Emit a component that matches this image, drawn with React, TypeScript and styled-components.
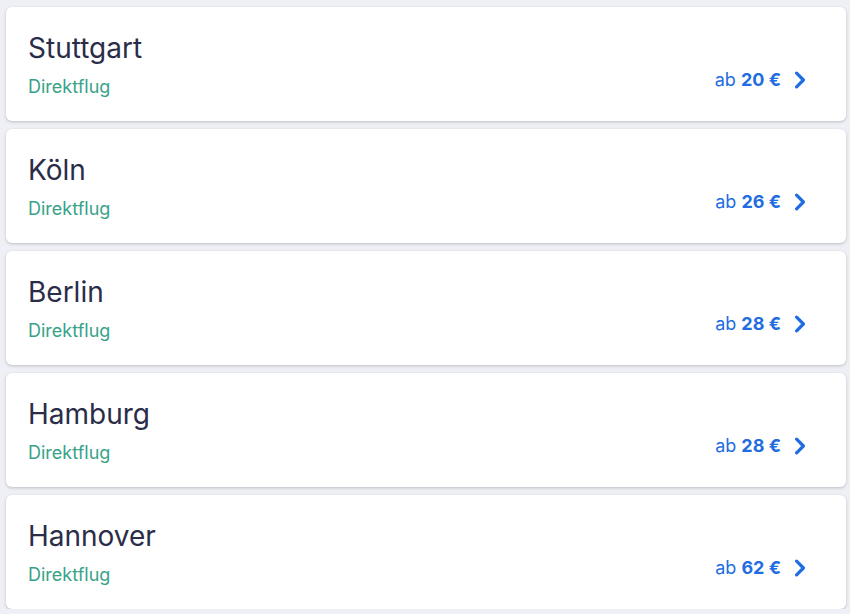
import React from 'react';
import styled, { createGlobalStyle } from 'styled-components';

const GlobalStyle = createGlobalStyle`
  body {
    margin: 0;
    background: #eff0f5;
    font-family: Inter, "Noto Sans", sans-serif;
  }
`;

const List = styled.div`
  display: flex;
  flex-direction: column;
  gap: 8px;
  padding: 7px 4px 0 6px;
`;

const Card = styled.div`
  display: flex;
  justify-content: space-between;
  align-items: flex-start;
  height: 114px;
  box-sizing: border-box;
  padding: 25px 40px 0 22px;
  background: #ffffff;
  border-radius: 6px;
  box-shadow: 0 1px 3px rgba(30, 35, 60, 0.25);
  cursor: pointer;
`;

const Info = styled.div`
  display: flex;
  flex-direction: column;
  gap: 12px;
`;

const City = styled.div`
  font-size: 28px;
  line-height: 32px;
  color: #2a2d48;
`;

const Tag = styled.div`
  font-size: 18px;
  line-height: 22px;
  color: #37a288;
`;

const Price = styled.div`
  display: flex;
  align-items: center;
  gap: 13px;
  margin-top: 37px;
  color: #1f6de0;
  font-size: 18px;
  line-height: 22px;
`;

const Amount = styled.span`
  font-weight: 700;
`;

type Flight = { city: string; price: number };

const flights: Flight[] = [
  { city: 'Stuttgart', price: 20 },
  { city: 'Köln', price: 26 },
  { city: 'Berlin', price: 28 },
  { city: 'Hamburg', price: 28 },
  { city: 'Hannover', price: 62 },
];

const Chevron = () => (
  <svg width="12" height="18" viewBox="0 0 12 18" fill="none">
    <path d="M2.6 2.2L9.4 9L2.6 15.8" stroke="#1f6de0" strokeWidth="3.2" strokeLinecap="round" strokeLinejoin="round" />
  </svg>
);

const App: React.FC = () => (
  <>
    <GlobalStyle />
    <List>
      {flights.map((f) => (
        <Card key={f.city}>
          <Info>
            <City>{f.city}</City>
            <Tag>Direktflug</Tag>
          </Info>
          <Price>
            <span>
              ab <Amount>{f.price} €</Amount>
            </span>
            <Chevron />
          </Price>
        </Card>
      ))}
    </List>
  </>
);

export default App;
